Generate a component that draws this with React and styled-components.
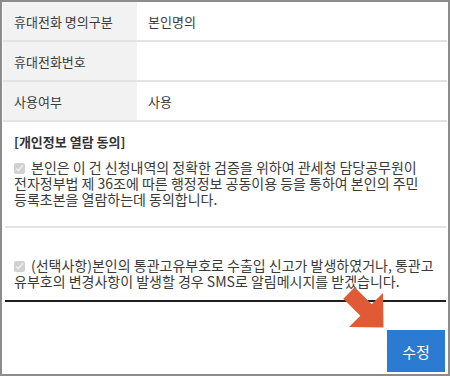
import React from "react";
import styled, { createGlobalStyle } from "styled-components";

const GlobalStyle = createGlobalStyle`
  html, body {
    margin: 0;
    padding: 0;
    background: #fff;
  }
  body {
    font-family: "Noto Sans CJK KR", "Noto Sans", sans-serif;
    color: #333;
  }
`;

const Frame = styled.div`
  position: relative;
  width: 450px;
  height: 376px;
  box-sizing: border-box;
  border: 2px solid #8c8c8c;
  background: #fff;
  overflow: hidden;
`;

const Inner = styled.div`
  display: flex;
  flex-direction: column;
  height: 100%;
  padding: 0 1px;
  box-sizing: border-box;
`;

const Row = styled.div`
  display: flex;
  height: 40px;
  box-sizing: border-box;
  border-bottom: 2px solid #e3e3e3;
  font-size: 13px;
  color: #3a3a3a;
`;

const Label = styled.div`
  display: flex;
  align-items: center;
  width: 134px;
  padding-left: 11px;
  box-sizing: border-box;
  background: #f2f2f2;
`;

const Value = styled.div`
  display: flex;
  align-items: center;
  flex: 1;
  padding-left: 11px;
`;

const Section = styled.div`
  padding: ${(p) => p.$pad};
  margin: 0 1px 0 2px;
  border-bottom: ${(p) => (p.$strong ? "2px solid #1e1e1e" : "2px solid #e3e3e3")};
`;

const Heading = styled.h3`
  margin: 0 0 9px 9px;
  font-size: 13px;
  line-height: 16px;
  font-weight: 700;
  color: #333;
`;

const Agree = styled.p`
  margin: 0 0 0 9px;
  font-size: 14px;
  line-height: 16px;
  color: #3a3a3a;
  white-space: nowrap;
`;

const Check = styled.input.attrs({ type: "checkbox", checked: true, disabled: true, readOnly: true })`
  width: 11px;
  height: 11px;
  margin: 0 6px 0 0;
  vertical-align: -1px;
  accent-color: #c8c8c8;
`;

const Footer = styled.div`
  flex: 1;
  display: flex;
  justify-content: flex-end;
  align-items: flex-start;
  padding: 28px 2px 0 0;
`;

const Button = styled.button`
  width: 58px;
  height: 42px;
  border: none;
  background: #2b7bd2;
  color: #fff;
  font-family: "Noto Sans CJK KR", "Noto Sans", sans-serif;
  font-size: 15px;
  cursor: pointer;
`;

const Arrow = styled.svg`
  position: absolute;
  left: 328px;
  top: 272px;
  width: 70px;
  height: 65px;
`;

export default function App() {
  return (
    <>
      <GlobalStyle />
      <Frame>
        <Inner>
          <Row>
            <Label>휴대전화 명의구분</Label>
            <Value>본인명의</Value>
          </Row>
          <Row>
            <Label>휴대전화번호</Label>
            <Value />
          </Row>
          <Row>
            <Label>사용여부</Label>
            <Value>사용</Value>
          </Row>

          <Section $pad="12px 0 19px 0">
            <Heading>[개인정보 열람 동의]</Heading>
            <Agree>
              <Check />
              본인은 이 건 신청내역의 정확한 검증을 위하여 관세청 담당공무원이
              <br />
              전자정부법 제 36조에 따른 행정정보 공동이용 등을 통하여 본인의 주민
              <br />
              등록초본을 열람하는데 동의합니다.
            </Agree>
          </Section>

          <Section $pad="29px 0 11px 0" $strong>
            <Agree>
              <Check />
              (선택사항)본인의 통관고유부호로 수출입 신고가 발생하였거나, 통관고
              <br />
              유부호의 변경사항이 발생할 경우 SMS로 알림메시지를 받겠습니다.
            </Agree>
          </Section>

          <Footer>
            <Button>수정</Button>
          </Footer>
        </Inner>
        <Arrow viewBox="0 0 70 65">
          <polygon
            points="24.7,13.3 41.7,30.3 53,19 53.5,53.5 19,53 30.3,41.7 13.3,24.7"
            fill="#e05a35"
          />
        </Arrow>
      </Frame>
    </>
  );
}
